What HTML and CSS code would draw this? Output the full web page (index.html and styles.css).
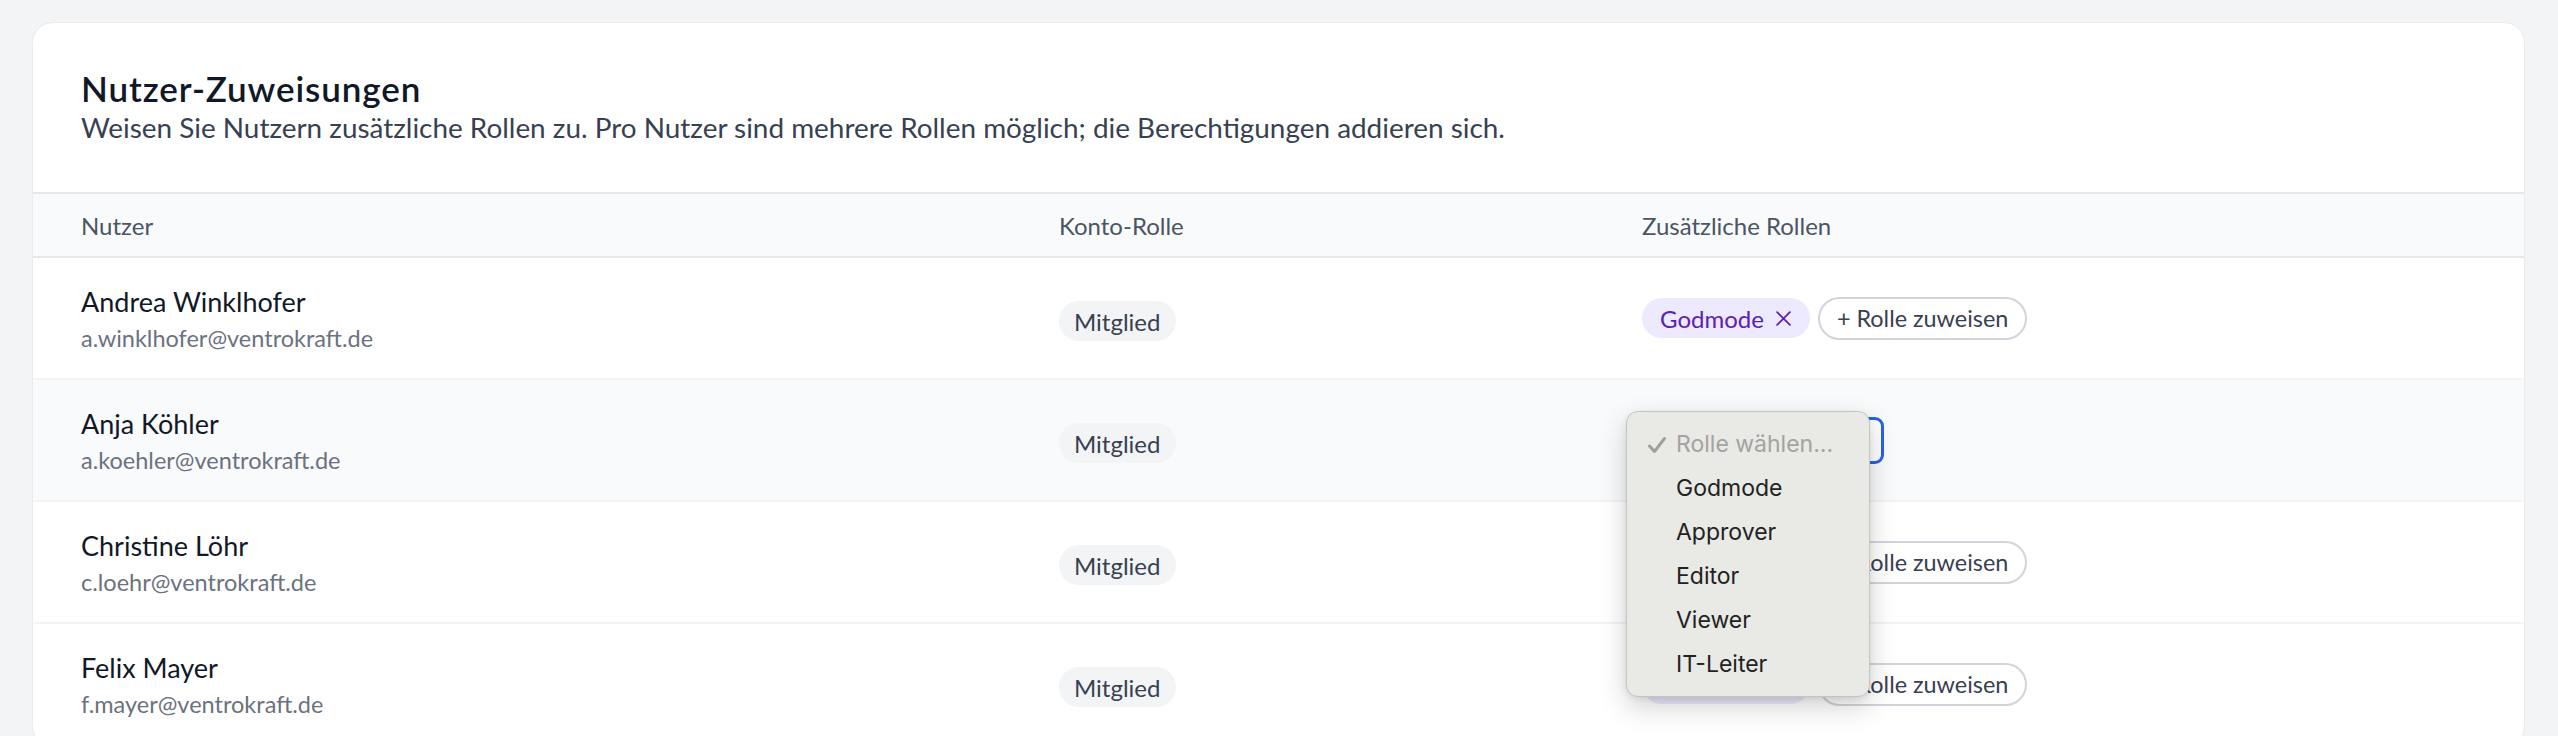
FILE: index.html
```html
<!DOCTYPE html>
<html lang="de">
<head>
<meta charset="utf-8">
<title>Nutzer-Zuweisungen</title>
<link rel="stylesheet" href="styles.css">
</head>
<body>
<div class="page">
  <section class="card">
    <header class="card-head">
      <h2 class="title">Nutzer-Zuweisungen</h2>
      <p class="subtitle">Weisen Sie Nutzern zusätzliche Rollen zu. Pro Nutzer sind mehrere Rollen möglich; die Berechtigungen addieren sich.</p>
    </header>
    <div class="table">
      <div class="row row-head">
        <div class="cell">Nutzer</div>
        <div class="cell">Konto-Rolle</div>
        <div class="cell">Zusätzliche Rollen</div>
      </div>

      <div class="row">
        <div class="cell user">
          <div class="name">Andrea Winklhofer</div>
          <div class="email">a.winklhofer@ventrokraft.de</div>
        </div>
        <div class="cell account"><span class="badge">Mitglied</span></div>
        <div class="cell roles">
          <span class="role">Godmode <svg class="x" viewBox="0 0 16 16"><path d="M2 2L14 14M14 2L2 14"/></svg></span>
          <button class="assign">+ Rolle zuweisen</button>
        </div>
      </div>

      <div class="row row-hover">
        <div class="cell user">
          <div class="name">Anja Köhler</div>
          <div class="email">a.koehler@ventrokraft.de</div>
        </div>
        <div class="cell account"><span class="badge">Mitglied</span></div>
        <div class="cell roles">
          <div class="select">Rolle wählen...</div>
          <div class="menu">
            <div class="item placeholder"><svg class="check" viewBox="0 0 20 18"><path d="M2.5 10 L7.5 15.5 L17.5 2.5"/></svg>Rolle wählen...</div>
            <div class="item">Godmode</div>
            <div class="item">Approver</div>
            <div class="item">Editor</div>
            <div class="item">Viewer</div>
            <div class="item">IT-Leiter</div>
          </div>
        </div>
      </div>

      <div class="row">
        <div class="cell user">
          <div class="name">Christine Löhr</div>
          <div class="email">c.loehr@ventrokraft.de</div>
        </div>
        <div class="cell account"><span class="badge">Mitglied</span></div>
        <div class="cell roles">
          <span class="role">Godmode <svg class="x" viewBox="0 0 16 16"><path d="M2 2L14 14M14 2L2 14"/></svg></span>
          <button class="assign">+ Rolle zuweisen</button>
        </div>
      </div>

      <div class="row">
        <div class="cell user">
          <div class="name">Felix Mayer</div>
          <div class="email">f.mayer@ventrokraft.de</div>
        </div>
        <div class="cell account"><span class="badge">Mitglied</span></div>
        <div class="cell roles">
          <span class="role">Godmode <svg class="x" viewBox="0 0 16 16"><path d="M2 2L14 14M14 2L2 14"/></svg></span>
          <button class="assign">+ Rolle zuweisen</button>
        </div>
      </div>
    </div>
  </section>
</div>
</body>
</html>
```

FILE: styles.css
```css
* { box-sizing: border-box; }

html, body {
  margin: 0;
  padding: 0;
  background: #f3f4f6;
  height: 736px;
  overflow: hidden;
}

body {
  font-family: "Lato", "Inter", sans-serif;
  color: #111827;
}

.page {
  padding: 23px 34px 0 33px;
}

.card {
  background: #ffffff;
  border-radius: 20px;
  box-shadow: 0 0 0 1px #e9ebee, 0 1px 3px rgba(17, 24, 39, 0.05);
}

.card-head {
  padding: 44px 48px 47px 48px;
}

.title {
  margin: 0;
  font-size: 35px;
  line-height: 42px;
  font-weight: 600;
  letter-spacing: 0.9px;
  color: #111827;
}

.subtitle {
  margin: 0;
  font-size: 27.9px;
  line-height: 36px;
  color: #374151;
}

.table {
  display: flex;
  flex-direction: column;
}

.row {
  display: grid;
  grid-template-columns: 978px 583px 1fr;
  align-items: center;
  height: 122px;
  border-bottom: 2px solid #f3f4f6;
}

.row-head {
  height: 66px;
  background: #f9fafb;
  border-top: 2px solid #e5e7eb;
  border-bottom: 2px solid #e5e7eb;
  font-size: 24px;
  color: #4b5563;
}

.row-hover {
  background: #f9fafb;
}

.cell {
  padding-left: 48px;
}

.user {
  display: flex;
  flex-direction: column;
  padding-top: 2px;
}

.name {
  font-size: 27px;
  line-height: 36px;
  color: #111827;
}

.email {
  margin-top: 2px;
  font-size: 23.5px;
  line-height: 32px;
  color: #6b7280;
}

.account {
  padding-top: 6px;
}

.badge {
  display: inline-flex;
  align-items: center;
  height: 40px;
  padding: 0 15px;
  border-radius: 20px;
  background: #f3f4f6;
  font-size: 24px;
  color: #374151;
}

.roles {
  position: relative;
  display: flex;
  align-items: center;
  gap: 8px;
  height: 100%;
}

.role {
  display: inline-flex;
  align-items: center;
  gap: 11px;
  height: 40px;
  padding: 0 18px;
  border-radius: 20px;
  background: #ede9fe;
  color: #5b21b6;
  font-size: 24px;
}

.x {
  width: 17px;
  height: 17px;
  fill: none;
  stroke: #5b21b6;
  stroke-width: 1.7;
  stroke-linecap: round;
}

.assign {
  height: 43px;
  padding: 0 17px;
  border: 2px solid #d1d5db;
  border-radius: 22px;
  background: #ffffff;
  font-family: inherit;
  font-size: 23.4px;
  color: #374151;
}

.select {
  width: 242px;
  height: 47px;
  border: 3px solid #2563eb;
  border-radius: 9px;
  background: #ffffff;
  padding: 0 14px;
  display: flex;
  align-items: center;
  font-size: 24px;
  color: #374151;
}

.menu {
  position: absolute;
  left: 32px;
  top: 31px;
  width: 244px;
  padding: 10px 0;
  background: #e9e9e5;
  border: 1px solid #c4c4c2;
  border-radius: 12px;
  box-shadow: 0 10px 28px rgba(0, 0, 0, 0.18), 0 2px 6px rgba(0, 0, 0, 0.08);
  font-family: "Inter", "Lato", sans-serif;
  z-index: 5;
}

.item {
  display: flex;
  align-items: center;
  height: 44px;
  padding-left: 49px;
  font-size: 23px;
  color: #222222;
  position: relative;
}

.item.placeholder {
  color: #a3a3a1;
}

.check {
  position: absolute;
  left: 20px;
  top: 14px;
  width: 20px;
  height: 18px;
  fill: none;
  stroke: #9f9f9d;
  stroke-width: 3;
  stroke-linecap: round;
  stroke-linejoin: round;
}
```
